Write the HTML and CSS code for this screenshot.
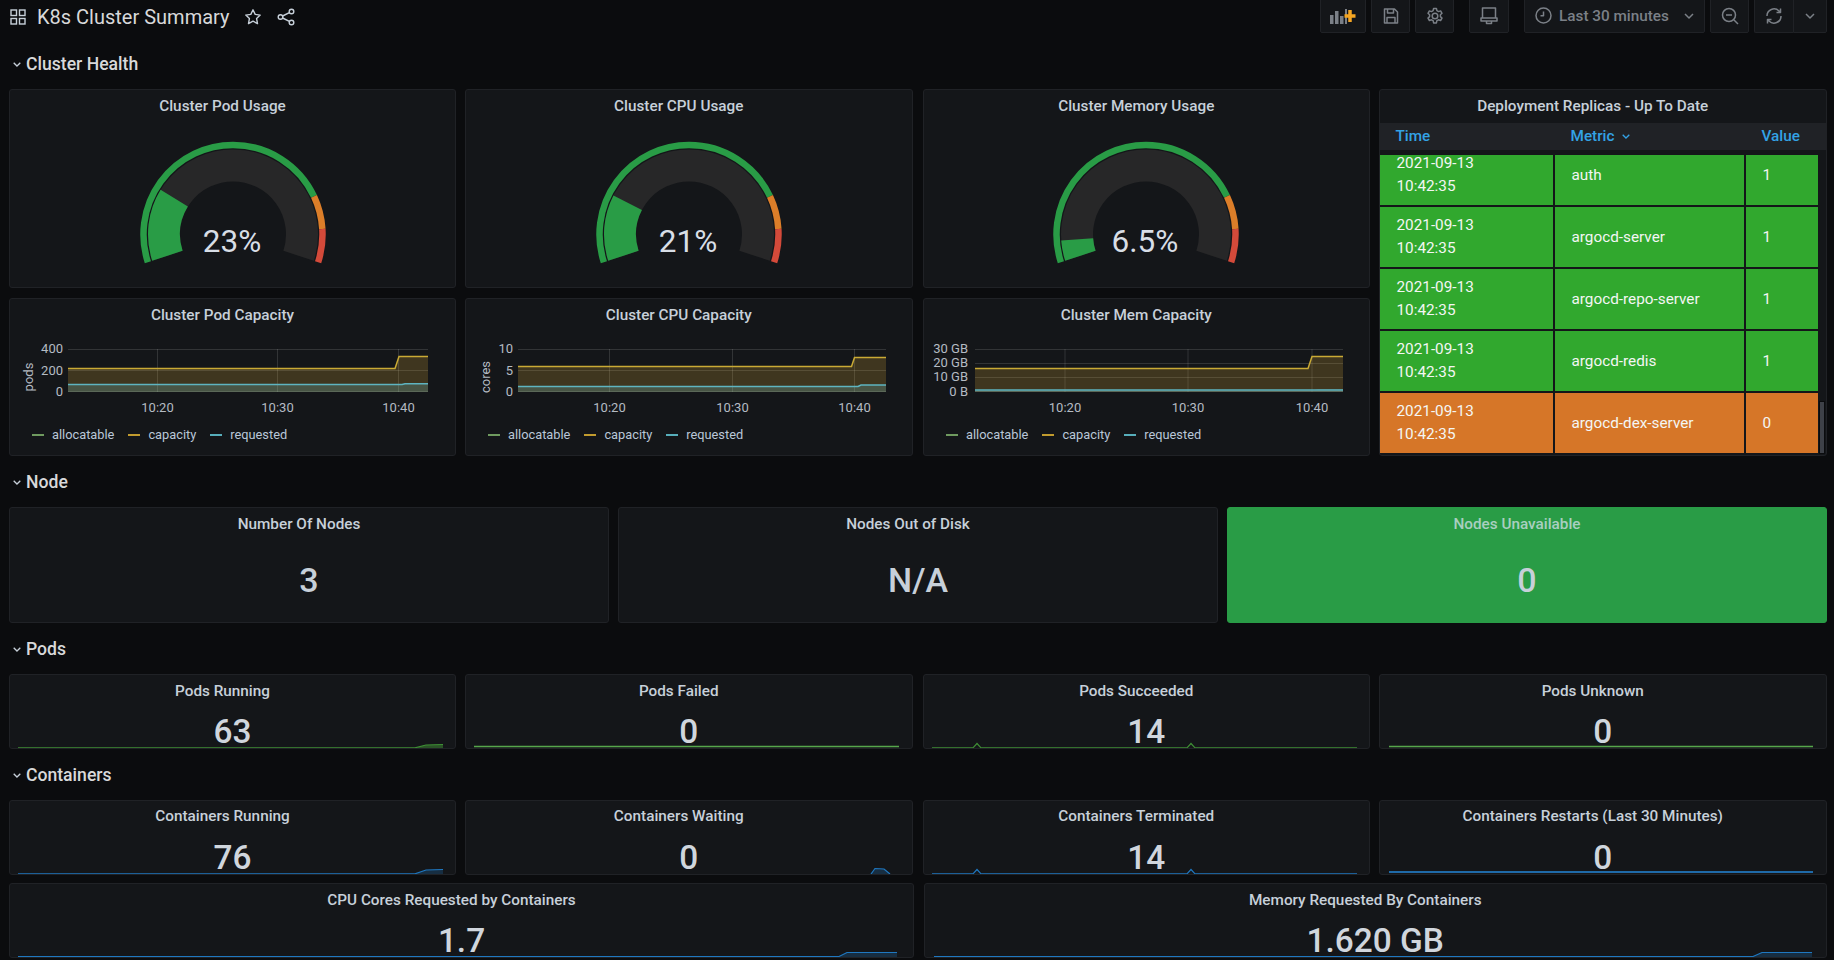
FILE: index.html
```html
<!DOCTYPE html>
<html lang="en">
<head>
    <meta charset="UTF-8">
    <title>K8s Cluster Summary</title>
    <link rel="stylesheet" href="styles.css">
</head>
<body>

    <!-- top bar -->
    <div class="topbar">
        <svg class="apps-icon" width="16" height="16" viewBox="0 0 16 16"><rect x="1" y="1" width="5.5" height="5.5"/><rect x="9.5" y="1" width="5.5" height="5.5"/><rect x="1" y="9.5" width="5.5" height="5.5"/><rect x="9.5" y="9.5" width="5.5" height="5.5"/></svg>
        <div class="dash-title">K8s Cluster Summary</div>
        <svg class="title-icon star" width="18" height="18" viewBox="0 0 18 18"><path d="M9 1.8l2.2 4.6 5 .7-3.6 3.5.9 5L9 13.2l-4.5 2.4.9-5L1.8 7.1l5-.7z"/></svg>
        <svg class="title-icon share" width="18" height="18" viewBox="0 0 18 18"><circle cx="3.5" cy="9" r="2.3"/><circle cx="14.500" cy="3.5" r="2.3"/><circle cx="14.500" cy="14.5" r="2.3"/><path d="M5.600 8l6.800-3.400M5.600 10l6.800 3.400"/></svg>
        <div class="toolbar">
            <div class="tool-btn btn-add">
                <svg width="26" height="16" viewBox="0 0 26 16"><path class="bars" d="M0 7h3.5v9H0zM5 3h3.5v13H5zM10 8h3.5v8H10zM15 1h2v15h-2z"/><path class="plus" d="M20 2v12M14.500 8h11"/></svg>
            </div>
            <div class="tool-btn">
                <svg class="line-icon" width="18" height="18" viewBox="0 0 18 18"><path d="M2.5 2h10l3 3v11h-13zM5.500 2v4h6V2M5 16v-5.500h8V16"/></svg>
            </div>
            <div class="tool-btn">
                <svg class="line-icon" width="18" height="18" viewBox="0 0 18 18"><circle cx="9" cy="9" r="2.8"/><path d="M7.600 1.500h2.800l.5 2.200 1.600.9 2.100-.7 1.400 2.400-1.600 1.500v1.800l1.600 1.500-1.400 2.400-2.100-.7-1.600.9-.5 2.200H7.600l-.5-2.200-1.600-.9-2.100.7-1.400-2.400 1.600-1.500V7.800L2 6.300l1.400-2.400 2.100.7 1.600-.9z"/></svg>
            </div>
            <div class="tool-btn btn-gap">
                <svg class="line-icon" width="18" height="18" viewBox="0 0 18 18"><path d="M2.500 1h13v10h-13zM1 11h16v3H1zM6.500 14v2.500h5V14"/></svg>
            </div>
            <div class="tool-btn btn-time">
                <svg class="line-icon" width="17" height="17" viewBox="0 0 17 17"><circle cx="8.500" cy="8.500" r="7.5"/><path d="M8.500 4.500v4.300H5.500"/></svg>
                <span>Last 30 minutes</span>
                <svg class="line-icon caret" width="10" height="6" viewBox="0 0 10 6"><path d="M1 1l4 4 4-4"/></svg>
            </div>
            <div class="tool-btn">
                <svg class="line-icon" width="18" height="18" viewBox="0 0 18 18"><circle cx="8" cy="8" r="6.5"/><path d="M5 8h6M13 13l4 4"/></svg>
            </div>
            <div class="tool-btn btn-joined">
                <svg class="line-icon" width="18" height="18" viewBox="0 0 18 18"><path d="M2 9a7 7 0 0 1 12-5l1.500 1.500M15.500 1.500v4h-4M16 9a7 7 0 0 1-12 5l-1.500-1.500M2.500 16.500v-4h4"/></svg>
            </div>
            <div class="tool-btn btn-caret">
                <svg class="line-icon caret" width="10" height="6" viewBox="0 0 10 6"><path d="M1 1l4 4 4-4"/></svg>
            </div>
        </div>
    </div>

    <!-- Cluster Health -->
    <div class="row-title"><svg class="chevron" width="8" height="5" viewBox="0 0 8 5"><path d="M.7.7L4 4 7.3.7"/></svg>Cluster Health</div>
    <div class="health-grid four-cols">
        <div class="panel">
            <div class="panel-title">Cluster Pod Usage</div>
            <svg class="gauge" width="220" height="164" viewBox="-110 -111.5 220 164">
                <path class="arc-track" pathLength="100" d="M-65.6 21.3A69 69 0 1 1 65.6 21.3"/>
                <path class="arc-fill" pathLength="100" stroke-dasharray="23 100" d="M-65.6 21.3A69 69 0 1 1 65.6 21.3"/>
                <path class="arc-thr green" pathLength="100" stroke-dasharray="80 100" d="M-85.1 27.7A89.5 89.5 0 1 1 85.1 27.7"/>
                <path class="arc-thr orange" pathLength="100" stroke-dasharray="10 100" stroke-dashoffset="-80" d="M-85.1 27.7A89.5 89.5 0 1 1 85.1 27.7"/>
                <path class="arc-thr red" pathLength="100" stroke-dasharray="10 100" stroke-dashoffset="-90" d="M-85.1 27.7A89.5 89.5 0 1 1 85.1 27.7"/>
                <text class="gauge-value" x="-1" y="17.5">23%</text>
            </svg>
        </div>
        <div class="panel">
            <div class="panel-title">Cluster CPU Usage</div>
            <svg class="gauge" width="220" height="164" viewBox="-110 -111.5 220 164">
                <path class="arc-track" pathLength="100" d="M-65.6 21.3A69 69 0 1 1 65.6 21.3"/>
                <path class="arc-fill" pathLength="100" stroke-dasharray="21 100" d="M-65.6 21.3A69 69 0 1 1 65.6 21.3"/>
                <path class="arc-thr green" pathLength="100" stroke-dasharray="80 100" d="M-85.1 27.7A89.5 89.5 0 1 1 85.1 27.7"/>
                <path class="arc-thr orange" pathLength="100" stroke-dasharray="10 100" stroke-dashoffset="-80" d="M-85.1 27.7A89.5 89.5 0 1 1 85.1 27.7"/>
                <path class="arc-thr red" pathLength="100" stroke-dasharray="10 100" stroke-dashoffset="-90" d="M-85.1 27.7A89.5 89.5 0 1 1 85.1 27.7"/>
                <text class="gauge-value" x="-1" y="17.5">21%</text>
            </svg>
        </div>
        <div class="panel">
            <div class="panel-title">Cluster Memory Usage</div>
            <svg class="gauge" width="220" height="164" viewBox="-110 -111.5 220 164">
                <path class="arc-track" pathLength="100" d="M-65.6 21.3A69 69 0 1 1 65.6 21.3"/>
                <path class="arc-fill" pathLength="100" stroke-dasharray="6.5 100" d="M-65.6 21.3A69 69 0 1 1 65.6 21.3"/>
                <path class="arc-thr green" pathLength="100" stroke-dasharray="80 100" d="M-85.1 27.7A89.5 89.5 0 1 1 85.1 27.7"/>
                <path class="arc-thr orange" pathLength="100" stroke-dasharray="10 100" stroke-dashoffset="-80" d="M-85.1 27.7A89.5 89.5 0 1 1 85.1 27.7"/>
                <path class="arc-thr red" pathLength="100" stroke-dasharray="10 100" stroke-dashoffset="-90" d="M-85.1 27.7A89.5 89.5 0 1 1 85.1 27.7"/>
                <text class="gauge-value" x="-1" y="17.5">6.5%</text>
            </svg>
        </div>

        <!-- replicas table -->
        <div class="panel table-panel">
            <div class="panel-title">Deployment Replicas - Up To Date</div>
            <div class="table-head">
                <div>Time</div>
                <div>Metric <svg class="head-caret" width="8" height="5" viewBox="0 0 8 5"><path d="M.7.7L4 4 7.3.7"/></svg></div>
                <div>Value</div>
            </div>
            <div class="table-body">
                <div class="table-scroll">
                    <div class="table-row ok"><div>2021-09-13<br>10:42:35</div><div>auth</div><div>1</div></div>
                    <div class="table-row ok"><div>2021-09-13<br>10:42:35</div><div>argocd-server</div><div>1</div></div>
                    <div class="table-row ok"><div>2021-09-13<br>10:42:35</div><div>argocd-repo-server</div><div>1</div></div>
                    <div class="table-row ok"><div>2021-09-13<br>10:42:35</div><div>argocd-redis</div><div>1</div></div>
                    <div class="table-row warn"><div>2021-09-13<br>10:42:35</div><div>argocd-dex-server</div><div>0</div></div>
                </div>
            </div>
            <div class="scroll-thumb"></div>
        </div>

        <div class="panel">
            <div class="panel-title">Cluster Pod Capacity</div>
            <svg class="chart" height="95">
                <path class="grid-line" d="M58 17.5H418M58 38.5H418M58 59.5H418M147.500 17V60M267.500 17V60M388.500 17V60"/>
                <path class="fill-cap" d="M58 36.500H385L389 24.500H418V60H58z"/>
                <path class="fill-req" d="M58 52.500H392L395 51.800H418V60H58z"/>
                <path class="line-cap" d="M58 36.500H385L389 24.500H418"/>
                <path class="line-req" d="M58 52.500H392L395 51.800H418"/>
                <text class="axis-label end" x="53" y="21">400</text>
                <text class="axis-label end" x="53" y="42.5">200</text>
                <text class="axis-label end" x="53" y="63.5">0</text>
                <text class="axis-label mid" transform="translate(23 45) rotate(-90)">pods</text>
                <text class="axis-label mid" x="147.500" y="80">10:20</text>
                <text class="axis-label mid" x="267.500" y="80">10:30</text>
                <text class="axis-label mid" x="388.500" y="80">10:40</text>
            </svg>
            <div class="legend">
                <div class="legend-item"><span class="dash d-alloc"></span>allocatable</div>
                <div class="legend-item"><span class="dash d-cap"></span>capacity</div>
                <div class="legend-item"><span class="dash d-req"></span>requested</div>
            </div>
        </div>
        <div class="panel">
            <div class="panel-title">Cluster CPU Capacity</div>
            <svg class="chart" height="95">
                <path class="grid-line" d="M52 17.5H420M52 38.5H420M52 59.5H420M143.500 17V60M266.500 17V60M388.500 17V60"/>
                <path class="fill-cap" d="M52 34.500H385.500L388.500 25.500H420V60H52z"/>
                <path class="fill-req" d="M52 54.500H392L395 53H420V60H52z"/>
                <path class="line-cap" d="M52 34.500H385.500L388.500 25.500H420"/>
                <path class="line-req" d="M52 54.500H392L395 53H420"/>
                <text class="axis-label end" x="47" y="21">10</text>
                <text class="axis-label end" x="47" y="42.5">5</text>
                <text class="axis-label end" x="47" y="63.5">0</text>
                <text class="axis-label mid" transform="translate(24 45) rotate(-90)">cores</text>
                <text class="axis-label mid" x="143.500" y="80">10:20</text>
                <text class="axis-label mid" x="266.500" y="80">10:30</text>
                <text class="axis-label mid" x="388.500" y="80">10:40</text>
            </svg>
            <div class="legend">
                <div class="legend-item"><span class="dash d-alloc"></span>allocatable</div>
                <div class="legend-item"><span class="dash d-cap"></span>capacity</div>
                <div class="legend-item"><span class="dash d-req"></span>requested</div>
            </div>
        </div>
        <div class="panel">
            <div class="panel-title">Cluster Mem Capacity</div>
            <svg class="chart" height="95">
                <path class="grid-line" d="M51 17.5H419M51 31.5H419M51 45.5H419M51 59.5H419M141 17V60M264 17V60M388 17V60"/>
                <path class="fill-cap" d="M51 36.500H384L388 24.500H419V60H51z"/>
                <path class="fill-req" d="M51 58H391L394 57H419V60H51z"/>
                <path class="line-cap" d="M51 36.500H384L388 24.500H419"/>
                <path class="line-req" d="M51 58H419"/>
                <text class="axis-label end" x="44" y="21">30 GB</text>
                <text class="axis-label end" x="44" y="35">20 GB</text>
                <text class="axis-label end" x="44" y="49">10 GB</text>
                <text class="axis-label end" x="44" y="63.5">0 B</text>
                <text class="axis-label mid" x="141" y="80">10:20</text>
                <text class="axis-label mid" x="264" y="80">10:30</text>
                <text class="axis-label mid" x="388" y="80">10:40</text>
            </svg>
            <div class="legend">
                <div class="legend-item"><span class="dash d-alloc"></span>allocatable</div>
                <div class="legend-item"><span class="dash d-cap"></span>capacity</div>
                <div class="legend-item"><span class="dash d-req"></span>requested</div>
            </div>
        </div>
    </div>

    <!-- Node -->
    <div class="row-title"><svg class="chevron" width="8" height="5" viewBox="0 0 8 5"><path d="M.7.7L4 4 7.3.7"/></svg>Node</div>
    <div class="node-grid">
        <div class="panel node-panel">
            <div class="panel-title">Number Of Nodes</div>
            <div class="node-value">3</div>
        </div>
        <div class="panel node-panel">
            <div class="panel-title">Nodes Out of Disk</div>
            <div class="node-value">N/A</div>
        </div>
        <div class="panel node-panel node-ok">
            <div class="panel-title">Nodes Unavailable</div>
            <div class="node-value">0</div>
        </div>
    </div>

    <!-- Pods -->
    <div class="row-title"><svg class="chevron" width="8" height="5" viewBox="0 0 8 5"><path d="M.7.7L4 4 7.3.7"/></svg>Pods</div>
    <div class="stat-grid four-cols">
        <div class="panel stat-panel">
            <div class="panel-title">Pods Running</div>
            <div class="stat-value">63</div>
            <svg class="spark green"><path class="spark-fill" d="M405 14L416 11L433 10.500V14z"/><path d="M8 13.800H405L416 11L433 10.500"/></svg>
        </div>
        <div class="panel stat-panel">
            <div class="panel-title">Pods Failed</div>
            <div class="stat-value">0</div>
            <svg class="spark bright-green"><path d="M8 12.500H433"/></svg>
        </div>
        <div class="panel stat-panel">
            <div class="panel-title">Pods Succeeded</div>
            <div class="stat-value">14</div>
            <svg class="spark green"><path d="M8 13.800H49L53 9.500L57 13.800H263L267 9.500L271 13.800H433"/></svg>
        </div>
        <div class="panel stat-panel">
            <div class="panel-title">Pods Unknown</div>
            <div class="stat-value">0</div>
            <svg class="spark bright-green"><path d="M9 12.500H433"/></svg>
        </div>
    </div>

    <!-- Containers -->
    <div class="row-title containers"><svg class="chevron" width="8" height="5" viewBox="0 0 8 5"><path d="M.7.7L4 4 7.3.7"/></svg>Containers</div>
    <div class="stat-grid four-cols container-stats">
        <div class="panel stat-panel">
            <div class="panel-title">Containers Running</div>
            <div class="stat-value">76</div>
            <svg class="spark blue"><path class="spark-fill" d="M405 14L416 10L433 9.500V14z"/><path d="M8 13.800H405L416 10L433 9.500"/></svg>
        </div>
        <div class="panel stat-panel">
            <div class="panel-title">Containers Waiting</div>
            <div class="stat-value">0</div>
            <svg class="spark blue"><path class="spark-fill" d="M405 14L409 8.500L418 9L424 14z"/><path d="M405 14L409 8.500L418 9L424 14"/></svg>
        </div>
        <div class="panel stat-panel">
            <div class="panel-title">Containers Terminated</div>
            <div class="stat-value">14</div>
            <svg class="spark blue"><path d="M8 13.800H49L53 9.500L57 13.800H263L267 9.500L271 13.800H433"/></svg>
        </div>
        <div class="panel stat-panel">
            <div class="panel-title">Containers Restarts (Last 30 Minutes)</div>
            <div class="stat-value">0</div>
            <svg class="spark blue thick"><path d="M9 12H433"/></svg>
        </div>
    </div>
    <div class="wide-grid">
        <div class="panel stat-panel">
            <div class="panel-title">CPU Cores Requested by Containers</div>
            <div class="stat-value">1.7</div>
            <svg class="spark blue"><path class="spark-fill" d="M829 14L837 9.500H887V14z"/><path d="M8 13.500H829L837 9.500H887"/></svg>
        </div>
        <div class="panel stat-panel">
            <div class="panel-title">Memory Requested By Containers</div>
            <div class="stat-value">1.620 GB</div>
            <svg class="spark blue"><path class="spark-fill" d="M828 14L837 9.500H887V14z"/><path d="M9 13.500H828L837 9.500H887"/></svg>
        </div>
    </div>

</body>
</html>
```

FILE: styles.css
```css
body {
    margin: 0;
    padding: 0 7px 0 9px;
    height: 960px;
    overflow: hidden;
    background-color: #0b0c0e;
    color: #c7d0d9;
    font-family: Roboto, 'Liberation Sans', sans-serif;
    font-size: 15.3px;
}

/* top bar */
.topbar {
    display: flex;
    align-items: flex-start;
    height: 38px;
}
.apps-icon {
    margin: 9px 11px 0 1px;
    fill: none;
    stroke: #c7d0d9;
    stroke-width: 1.4;
}
.dash-title {
    font-size: 20px;
    line-height: 34px;
    color: #d8d9da;
    margin-right: 15px;
}
.title-icon {
    margin-top: 8px;
    margin-right: 15px;
    fill: none;
    stroke: #c7d0d9;
    stroke-width: 1.4;
    stroke-linejoin: round;
}
.toolbar {
    display: flex;
    margin-left: auto;
    margin-top: -2px;
    gap: 5px;
}
.tool-btn {
    display: flex;
    align-items: center;
    justify-content: center;
    box-sizing: border-box;
    width: 39px;
    height: 35px;
    background-color: #141619;
    border: 1px solid #202226;
    border-radius: 2px;
    color: #7b8087;
    font-weight: 500;
}
.btn-add {
    width: 46px;
}
.btn-gap {
    margin-left: 10px;
    width: 40px;
}
.btn-time {
    width: 181px;
    margin-left: 10px;
    padding-left: 10px;
    justify-content: flex-start;
}
.btn-time span {
    margin-left: 7px;
}
.btn-time .caret {
    margin-left: 15px;
}
.btn-joined {
    border-right: none;
    border-radius: 2px 0 0 2px;
}
.btn-caret {
    width: 34px;
    margin-left: -5px;
    border-radius: 0 2px 2px 0;
}
.line-icon {
    fill: none;
    stroke: #7b8087;
    stroke-width: 1.5;
    stroke-linejoin: round;
}
.bars {
    fill: #7b8087;
}
.plus {
    fill: none;
    stroke: #f5a623;
    stroke-width: 3.5;
}

/* row headers */
.row-title {
    display: flex;
    align-items: center;
    height: 51px;
    font-size: 17.6px;
    font-weight: 500;
    color: #d8d9da;
}
.row-title.containers {
    box-sizing: border-box;
    height: 52px;
    padding-top: 1px;
}
.chevron {
    margin: 1px 5px 0 4px;
    fill: none;
    stroke: #c7d0d9;
    stroke-width: 1.3;
}

/* panel grids */
.four-cols {
    display: grid;
    grid-template-columns: 447px 447.5px 448px 448.5px;
    column-gap: 9px;
}
.four-cols > .panel:nth-child(4n + 3) {
    margin-left: 1.5px;
}
.health-grid {
    grid-template-rows: 199px 158px;
    row-gap: 10px;
}
.node-grid {
    display: grid;
    grid-template-columns: repeat(3, 1fr);
    gap: 9px;
    height: 116px;
}
.stat-grid {
    height: 74px;
}
.wide-grid {
    display: grid;
    grid-template-columns: 905px 1fr;
    gap: 9.5px;
    height: 74px;
    margin-top: 9px;
}
.panel {
    position: relative;
    box-sizing: border-box;
    background-color: #141619;
    border: 1px solid #202226;
    border-radius: 3px;
}
.panel-title {
    height: 33px;
    padding-right: 20px;
    line-height: 33px;
    text-align: center;
    font-weight: 500;
    color: #c7d0d9;
    white-space: nowrap;
}
.container-stats .panel-title {
    line-height: 31px;
}

/* gauges */
.gauge {
    display: block;
    margin: 0 auto;
    fill: none;
}
.arc-track {
    stroke: #272728;
    stroke-width: 32;
}
.arc-fill {
    stroke: #299c46;
    stroke-width: 32;
}
.arc-thr {
    stroke-width: 6.5;
}
.arc-thr.green {
    stroke: #299c46;
}
.arc-thr.orange {
    stroke: #dc7e29;
}
.arc-thr.red {
    stroke: #d44a3a;
}
.gauge-value {
    fill: #d8dee6;
    font-size: 31.5px;
    text-anchor: middle;
}

/* capacity charts */
.chart {
    display: block;
    width: 100%;
    fill: none;
}
.grid-line {
    stroke: #ffffff;
    stroke-opacity: 0.13;
}
.fill-cap {
    fill: #eab839;
    fill-opacity: 0.2;
}
.fill-req {
    fill: #6ed0e0;
    fill-opacity: 0.2;
}
.line-cap {
    stroke: #c9aa35;
    stroke-width: 1.5;
}
.line-req {
    stroke: #5eb4c0;
    stroke-width: 1.5;
}
.axis-label {
    fill: #b4bbc3;
    font-size: 13px;
}
.axis-label.end {
    text-anchor: end;
}
.axis-label.mid {
    text-anchor: middle;
}
.legend {
    display: flex;
    padding-left: 22px;
    gap: 14px;
    font-size: 12.8px;
    line-height: 16px;
    color: #b9c7d8;
}
.legend-item {
    display: flex;
    align-items: center;
}
.dash {
    width: 12px;
    height: 2px;
    margin-right: 8px;
}
.d-alloc {
    background-color: #6f9a5f;
}
.d-cap {
    background-color: #c19b2e;
}
.d-req {
    background-color: #57aebb;
}

/* replicas table */
.table-panel {
    grid-column: 4;
    grid-row: 1 / span 2;
}
.table-head,
.table-row {
    display: grid;
    grid-template-columns: 173px 189px 72px;
    gap: 2px;
}
.table-head {
    height: 27px;
    line-height: 27px;
    background-color: #202226;
    color: #33a2e5;
    font-weight: 500;
}
.table-head div {
    padding-left: 16px;
}
.head-caret {
    margin: 0 0 2px 4px;
    fill: none;
    stroke: #33a2e5;
    stroke-width: 1.3;
}
.table-body {
    height: 298px;
    margin-top: 5px;
    overflow: hidden;
}
.table-scroll {
    display: flex;
    flex-direction: column;
    gap: 2px;
    margin-top: -10px;
}
.table-row {
    height: 60px;
    line-height: 23px;
    color: #f4f6f4;
}
.table-row div {
    display: flex;
    flex-direction: column;
    justify-content: center;
    padding-left: 17px;
}
.table-row div:first-child {
    display: block;
    padding-top: 7px;
    box-sizing: border-box;
}
.table-row.ok div {
    background-color: #31a82e;
}
.table-row.warn div {
    background-color: #d67628;
}
.scroll-thumb {
    position: absolute;
    right: 1px;
    top: 311px;
    width: 6px;
    height: 53px;
    background-color: #3e4148;
    border: 1px solid #0b0c0e;
    box-sizing: border-box;
}

/* stat panels */
.node-value {
    margin-top: 18px;
    line-height: 42px;
    text-align: center;
    font-size: 34px;
    font-weight: 500;
    color: #c7d0d9;
}
.node-ok {
    background-color: #299c46;
    border-color: #299c46;
}
.node-ok .panel-title {
    color: #a9cfc0;
}
.stat-value {
    margin-top: 8px;
    line-height: 32px;
    text-align: center;
    font-size: 33.4px;
    font-weight: 500;
    color: #d0d6dd;
}
.spark {
    position: absolute;
    left: 0;
    bottom: 0;
    width: 100%;
    height: 14px;
    fill: none;
    stroke-width: 1.2;
}
.spark.green {
    stroke: #3f8f35;
}
.spark.bright-green {
    stroke: #56a64b;
    stroke-width: 1.5;
}
.spark.blue {
    stroke: #1f78c1;
}
.spark.thick {
    stroke-width: 2;
    stroke: #1f6aa8;
}
.spark .spark-fill {
    stroke: none;
    opacity: 0.25;
}
.spark.green .spark-fill {
    fill: #3f8f35;
    opacity: 0.5;
}
.spark.blue .spark-fill {
    fill: #1f78c1;
}
```
